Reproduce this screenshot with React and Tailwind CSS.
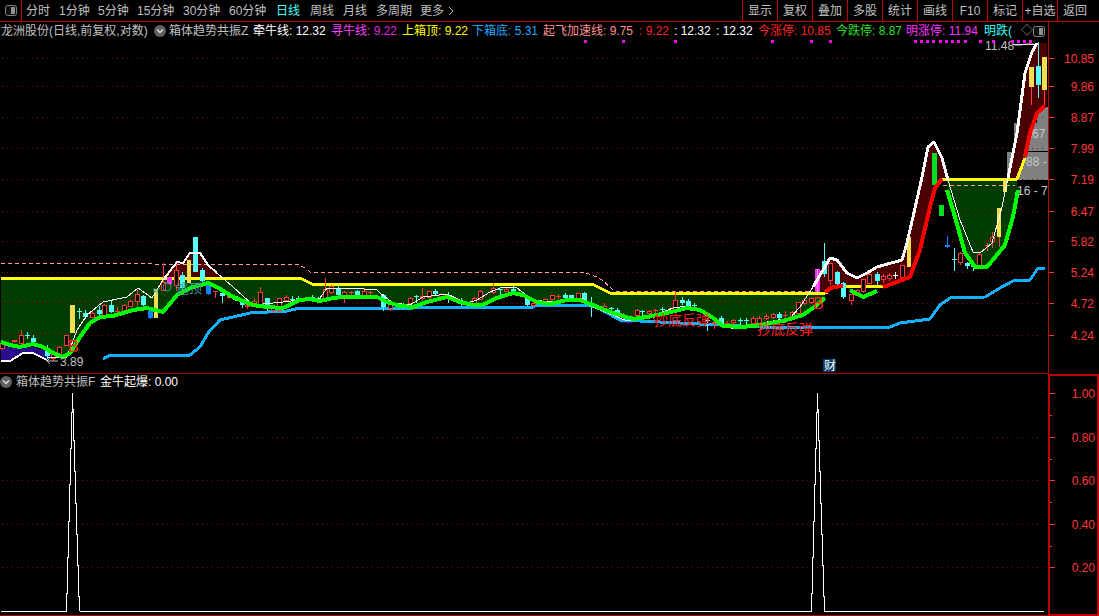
import React from 'react';

const FONT = '[font-family:"Liberation_Sans","Noto_Sans_CJK_SC",sans-serif]';

// 图表数据都是截图上的像素坐标
const GREEN_A = [[1,342],[10,345],[20,347],[33,344],[43,347],[53,353],[63,357],[70,353],[80,337],[90,323],[100,317],[113,316],[133,310],[147,308],[163,312],[177,295],[190,288],[208,283],[217,287],[233,297],[253,305],[267,307],[283,308],[300,300],[310,299],[320,301],[333,298],[343,297],[360,297],[377,297],[387,302],[400,306],[413,307],[427,302],[447,297],[460,302],[473,305],[482,305],[497,298],[513,293],[523,295],[537,302],[550,304],[567,300],[580,300],[593,305],[600,308],[613,313],[633,319],[647,317],[667,313],[687,308],[700,310],[713,318],[723,326],[743,327],[760,325],[783,321],[803,315],[813,308],[825,298]];
const GREEN_B = [[850,290],[863,297],[877,291]];
const GREEN_C = [[947,190],[955,217],[965,253],[975,267],[987,267],[1005,245],[1013,217],[1018,190]];
const RED_A = [[825,292],[833,287],[843,286]];
const RED_B = [[883,287],[897,282],[910,277],[920,250],[930,207],[935,188],[942,179]];
const RED_C = [[1025,157],[1030,133],[1037,113],[1045,106]];
const YELLOW_A = [[1,278],[300,278],[312,284],[592,284],[600,288],[610,293],[825,293],[828,292]];
const YELLOW_B = [[843,286],[883,286]];
const YELLOW_C = [[942,179],[1017,179],[1025,158]];
const BLUE = [[103,359],[110,355],[190,355],[200,347],[208,333],[220,320],[233,317],[250,313],[287,311],[300,308],[413,308],[420,307],[533,307],[537,305],[590,305],[600,309],[620,320],[760,327],[890,327],[900,323],[930,319],[940,305],[950,298],[985,297],[1000,288],[1013,281],[1030,280],[1038,268],[1045,268]];
const WHITE_A = [[163,280],[177,262],[183,263],[190,253],[200,253],[208,265],[217,273]];
const WHITE_B = [[813,287],[823,270],[830,258],[837,260],[847,273],[857,278],[867,273],[877,267],[902,260],[907,243],[913,217],[922,177],[928,147],[934,142],[942,158],[948,180]];
const WHITE_C = [[1008,178],[1017,133],[1025,73],[1032,52],[1037,43]];
const WHITE_LOW = [[1,361],[10,361],[23,353],[33,353],[43,358],[47,360]];
const THIN_A = [[47,358],[67,357],[77,330],[87,315],[103,302],[127,297],[138,288],[152,298],[163,280]];
const THIN_C = [[217,273],[233,287],[253,305],[283,302],[300,300],[310,298],[320,298],[327,288],[350,288],[377,290],[380,293],[393,303],[410,305],[423,297],[447,294],[467,303],[477,300],[490,292],[503,287],[517,288],[533,300],[550,302],[567,299],[583,298],[593,307],[600,310],[613,315],[627,321],[653,316],[673,308],[687,306],[703,310],[717,320],[733,329],[750,327],[767,322],[790,318],[800,307],[813,287],[823,270]];
const THIN_B = [[948,180],[960,220],[973,252],[980,253],[992,243],[1002,207],[1008,178]];
const DASH_A = [[1,263],[300,265],[308,270],[310,272],[583,272],[597,277],[602,280],[613,290],[615,291],[813,291]];

// [x, 最高, 实体上, 实体下, 最低, 类型]
const CANDLES = [
  [2,342,343,348,349,'r'],[14,340,340,341,342,'r'],[21,330,335,343,346,'r'],[27,332,335,335,338,'c'],[33,335,338,342,345,'c'],[47,345,348,356,358,'c'],[53,351,353,358,360,'r'],[59,346,347,355,357,'r'],[66,335,335,345,345,'r'],
  [79,308,311,311,318,'c'],[85,310,313,317,318,'c'],[92,311,313,317,317,'r'],[99,306,310,314,315,'c'],[104,304,305,316,316,'r'],[111,300,305,312,312,'c'],[117,307,311,311,312,'r'],[124,304,305,311,312,'r'],[130,300,301,306,306,'r'],[137,290,294,301,305,'r'],[143,295,296,305,308,'c'],[150,308,311,318,318,'b'],[163,263,282,290,290,'r'],[169,277,277,284,284,'p'],[176,262,270,285,290,'r'],[182,272,275,288,293,'c'],[202,268,270,281,283,'c'],[208,285,285,294,294,'b'],[215,291,291,291,297,'r'],[222,290,293,296,302,'c'],[229,293,295,297,298,'r'],[235,296,296,300,300,'c'],[242,300,302,305,307,'c'],[247,304,305,306,308,'r'],[254,298,301,303,304,'r'],[260,287,292,305,307,'r'],[267,298,298,308,310,'c'],[273,306,308,310,311,'r'],[279,298,298,310,311,'r'],[286,295,297,300,301,'r'],[292,296,299,299,302,'c'],[298,296,298,300,301,'c'],
  [305,297,298,300,300,'r'],[312,295,297,299,300,'c'],[318,297,298,300,301,'c'],[325,278,289,298,298,'r'],[331,285,286,292,293,'r'],[338,284,288,295,295,'c'],[344,291,292,295,302,'r'],[351,291,292,292,295,'r'],[357,290,291,295,295,'c'],[364,288,291,295,296,'r'],[370,291,292,292,295,'r'],[383,294,295,307,310,'c'],[390,301,302,308,310,'r'],[403,303,305,305,308,'c'],[410,297,298,303,304,'r'],[416,295,296,296,302,'c'],[422,288,296,298,299,'r'],[429,291,291,297,299,'r'],[435,289,291,294,295,'c'],[441,293,294,296,296,'r'],[448,292,295,295,302,'c'],[461,298,303,303,305,'c'],[474,297,298,303,304,'r'],[480,290,291,299,299,'r'],[493,283,288,292,293,'r'],[500,289,289,289,294,'c'],[506,288,289,291,291,'r'],[513,286,289,292,292,'c'],[527,296,297,305,305,'c'],[533,302,303,305,306,'r'],[545,298,299,301,302,'r'],[552,295,295,299,300,'r'],[558,294,296,296,298,'r'],[565,293,295,298,298,'c'],[571,295,295,298,299,'c'],[578,293,293,298,299,'r'],[584,292,293,300,300,'c'],[591,297,306,306,316,'c'],
  [604,303,306,310,311,'r'],[611,307,308,308,312,'c'],[617,308,310,316,317,'c'],[623,313,315,317,319,'r'],[630,315,316,318,320,'r'],[637,309,310,315,316,'r'],[642,310,311,311,315,'c'],[649,310,311,313,315,'r'],[655,309,310,310,315,'r'],[662,307,309,309,312,'c'],[669,308,310,311,313,'r'],[675,291,300,309,310,'r'],[682,297,300,303,304,'c'],[688,299,301,307,308,'c'],[694,303,305,305,310,'c'],[707,318,320,320,330,'c'],[714,320,322,323,328,'r'],[721,316,318,323,324,'c'],[727,321,323,325,326,'r'],[733,319,320,322,324,'r'],[740,318,320,320,324,'c'],[746,318,320,320,324,'c'],[753,316,318,323,325,'r'],[759,316,318,323,325,'r'],[766,314,316,318,319,'r'],[773,313,314,317,318,'r'],[779,312,314,318,320,'c'],[785,311,315,315,322,'r'],[792,311,312,318,318,'r'],[798,302,302,313,313,'r'],[804,298,300,303,304,'r'],[811,297,298,302,303,'r'],
  [824,243,261,274,276,'c'],[830,263,263,280,284,'r'],[837,271,272,284,286,'c'],[843,282,283,297,298,'c'],[851,294,294,300,304,'r'],[857,289,290,295,295,'r'],[863,279,279,291,292,'r'],[869,273,274,283,283,'r'],[877,272,274,281,284,'c'],[883,274,276,279,282,'r'],[889,273,275,278,280,'r'],[895,272,275,275,278,'w'],[902,265,265,277,278,'r'],
  [947,236,245,247,247,'b'],[954,248,259,259,270,'c'],[960,252,253,262,264,'r'],[967,262,263,266,268,'c'],[973,264,266,266,270,'c'],[979,253,254,265,266,'r'],[987,243,245,245,250,'r'],[992,232,237,241,247,'r'],
];
const BARS = [[70,305,5,28,'#f0e050'],[154,289,4,29,'#f0e050'],[187,260,4,23,'#f0e050'],[193,237,5,35,'#54fcfc'],[907,237,4,30,'#f0e050'],[932,153,5,32,'#00e020'],[939,205,5,11,'#00e020'],[997,208,4,29,'#f0e050'],[1003,180,4,12,'#f0e050'],[1029,67,5,20,'#f0e050'],[1036,66,5,19,'#54fcfc'],[1042,57,5,33,'#f0e050']];
const WICKS = [[1031,87,105,'#ff4040'],[1038,42,66,'#54fcfc'],[1038,85,98,'#54fcfc'],[1044,90,105,'#ff4040'],[999,237,247,'#ff4040']];

const DOTS = [584,622,674,771,810,829,914,920,926,932,939,945,951,957,964,979,992,1011,1017,1023,1029];
const PRICE = [['10.85',58],['9.86',86],['8.87',117],['7.99',148],['7.19',179],['6.47',211],['5.82',241],['5.24',272],['4.72',303],['4.24',335]];
const SUB = [['1.00',393],['0.80',437],['0.60',480],['0.40',524],['0.20',567]];

const pts = (a) => a.map((p) => p.join(',')).join(' ');
const spike = (o) => `M${o + 1} 611 H${o + 66.5} V593 H${o + 67.5} V557 H${o + 68.5} V521 H${o + 69.5} V484 H${o + 70.5} V448 H${o + 71.5} V412 H${o + 72.5} V393 V409 H${o + 73.5} V440 H${o + 74.5} V471 H${o + 75.5} V503 H${o + 76.5} V534 H${o + 77.5} V565 H${o + 78.5} V596 H${o + 79.5} V611`;

function Line({ data, color, width = 3, dash }) {
  return <polyline points={pts(data)} fill="none" stroke={color} strokeWidth={width} strokeDasharray={dash} strokeLinejoin="bevel" shapeRendering="crispEdges" />;
}

function Candle({ c }) {
  const [x, hi, top, bot, lo, kind] = c;
  const color = { r: '#ff3838', c: '#54fcfc', b: '#0a84ff', p: '#ff30ff', w: '#ffffff' }[kind];
  const filled = kind !== 'r';
  return (
    <g shapeRendering="crispEdges">
      <line x1={x + 0.5} x2={x + 0.5} y1={hi} y2={lo + 1} stroke={color} />
      {top === bot ? (
        <line x1={x - 2} x2={x + 3} y1={top + 0.5} y2={top + 0.5} stroke={color} />
      ) : filled ? (
        <rect x={x - 2} y={top} width={5} height={bot - top} fill={color} />
      ) : (
        <rect x={x - 2 + 0.5} y={top + 0.5} width={4} height={bot - top} fill="#000" stroke={color} />
      )}
    </g>
  );
}

function MainChart() {
  return (
    <svg className="block" width="1048" height="351" viewBox="0 22 1048 351">
      <g fill="#808080">
        <rect x="1037" y="107" width="11" height="16" />
        <rect x="1014" y="123" width="34" height="28" />
        <rect x="1007" y="152" width="41" height="28" />
      </g>
      {/* 填充区 */}
      <polygon points={pts([...YELLOW_A.slice(0, 7), ...[...GREEN_A].reverse()])} fill="#003c00" />
      <polygon points={pts([[947,180],[1017,180],...[...GREEN_C].reverse()])} fill="#003c00" />
      <polygon points={pts([[1,345],[10,347],[20,349],[33,347],[43,350],[53,353],[47,360],[43,358],[33,353],[23,353],[10,361],[1,361]])} fill="#2a0c8c" />
      <polygon points={pts([[622,317],[633,321],[640,320],[630,324],[620,322]])} fill="#2a0c8c" />
      <polygon points={pts([...WHITE_A, [222,278], [163,278]])} fill="#4a0000" />
      <polygon points={pts([...WHITE_B, [948,180], ...[...RED_B].reverse(), [843,286], [825,292]])} fill="#4a0000" />
      <polygon points={pts([...WHITE_C, [1047,43], [1047,106], ...[...RED_C].reverse(), [1017,180], [1008,180]])} fill="#4a0000" />

      <g stroke="#8c0000" strokeDasharray="1 4" shapeRendering="crispEdges">
        {PRICE.map(([t, y]) => <line key={t} x1="2" x2="1047" y1={y + 0.5} y2={y + 0.5} />)}
      </g>
      <Line data={DASH_A} color="#ff9c9c" width={1} dash="4 3" />
      <Line data={[[943,185],[1015,185]]} color="#ff9c9c" width={1} dash="4 3" />
      <Line data={BLUE} color="#12b2ff" />
      <Line data={YELLOW_A} color="#ffff00" />
      <Line data={YELLOW_B} color="#ffff00" />
      <Line data={YELLOW_C} color="#ffff00" />

      {CANDLES.map((c) => <Candle key={c[0]} c={c} />)}
      <g shapeRendering="crispEdges">
        {BARS.map(([x, y, w, h, f]) => <rect key={x} x={x} y={y} width={w} height={h} fill={f} />)}
        {WICKS.map(([x, a, b, f]) => <line key={x + '-' + a} x1={x + 0.5} x2={x + 0.5} y1={a} y2={b} stroke={f} />)}
        <rect x="815" y="269" width="2" height="23" fill="#ff30ff" />
        <rect x="817" y="269" width="1" height="23" fill="#ff90ff" />
        <rect x="818" y="269" width="2" height="23" fill="#ff30ff" />
      </g>

      <Line data={THIN_A} color="#ffffff" width={1} />
      <Line data={THIN_C} color="#ffffff" width={1} />
      <Line data={THIN_B} color="#ffffff" width={1} />
      <Line data={[[1013,44],[1037,44]]} color="#ffffff" width={1} />
      <Line data={WHITE_LOW} color="#ffffff" width={2} />
      <Line data={WHITE_A} color="#ffffff" width={2} />
      <Line data={WHITE_B} color="#ffffff" width={3} />
      <Line data={WHITE_C} color="#ffffff" width={3} />
      <Line data={GREEN_A} color="#00ff00" width={4} />
      <Line data={GREEN_B} color="#00ff00" width={4} />
      <Line data={GREEN_C} color="#00ff00" width={4} />
      <Line data={RED_A} color="#ff0000" width={4} />
      <Line data={RED_B} color="#ff0000" width={4} />
      <Line data={RED_C} color="#ff0000" width={4} />

      <g className={FONT}>
        <text x="68" y="352" fontSize="16" fill="#ff2020">B</text>
        <text x="813" y="309" fontSize="16" fill="#ff2020">B</text>
        <path d="M58 361H47M50 358l-3 3 3 3" stroke="#c0c0c0" fill="none" />
        <text x="60" y="366" fontSize="12" fill="#c0c0c0">3.89</text>
        <path d="M160 288l-6 4M154 288v4h4" stroke="#3c9a9a" fill="none" />
        <circle cx="167" cy="287" r="4" stroke="#3c9a9a" fill="none" />
        <text x="176" y="293" fontSize="13" fill="#3c9a9a">逃顶</text>
        <path d="M652 317l6 6" stroke="#ff2020" />
        <text x="654" y="325" fontSize="14" fill="#ff2020">抄底反弹</text>
        <text x="757" y="334" fontSize="14" fill="#ff2020">抄底反弹</text>
        <rect x="823" y="359" width="13" height="13" fill="#0a3a6a" />
        <text x="824" y="370" fontSize="12" fill="#ffffff">财</text>
        <text x="1032" y="138" fontSize="12" fill="#c8c8c8">67</text>
        <text x="1026" y="166" fontSize="12" fill="#c8c8c8">88 -</text>
        <text x="1017" y="195" fontSize="12" fill="#c8c8c8">16 - 7</text>
        <text x="985" y="50" fontSize="12" fill="#c0c0c0">11.48</text>
        <path d="M1014 45h8M1025 44h8" stroke="#c0c0c0" />
      </g>
      <g fill="#ff00ff">
        {DOTS.map((x) => <rect key={x} x={x} y="40" width="3" height="3" />)}
      </g>
    </svg>
  );
}

function SubChart() {
  return (
    <svg className="block" width="1048" height="240" viewBox="0 375 1048 240">
      <g stroke="#8c0000" strokeDasharray="1 4" shapeRendering="crispEdges">
        {SUB.slice(1).map(([t, y]) => <line key={t} x1="2" x2="1047" y1={y + 0.5} y2={y + 0.5} />)}
      </g>
      <path d={spike(0)} fill="none" stroke="#fff" shapeRendering="crispEdges" />
      <path d={spike(745) + ' H1044'} fill="none" stroke="#fff" shapeRendering="crispEdges" />
      <path d="M80 611H811" fill="none" stroke="#fff" shapeRendering="crispEdges" />
    </svg>
  );
}

function Axis({ rows, minor, top, height }) {
  return (
    <svg className="block" width="49" height={height} viewBox={`1049 ${top} 49 ${height}`}>
      {rows.map(([t, y]) => (
        <g key={t}>
          <line x1="1049" x2="1054" y1={y + 0.5} y2={y + 0.5} stroke="#ff3838" shapeRendering="crispEdges" />
          <text x="1094" y={y + 5} fontSize="12" fill="#ff3838" textAnchor="end" className={FONT}>{t}</text>
        </g>
      ))}
      {minor.map((y) => <line key={y} x1="1049" x2="1051" y1={y + 0.5} y2={y + 0.5} stroke="#ff3838" shapeRendering="crispEdges" />)}
    </svg>
  );
}

function PanelIcon() {
  return (
    <svg width="12" height="11" viewBox="0 0 12 11" className="shrink-0">
      <rect x="0.5" y="0.5" width="11" height="10" rx="2" fill="#111" stroke="#808080" />
      <rect x="6" y="2" width="4" height="7" fill="#909090" />
    </svg>
  );
}

function Chevron() {
  return (
    <svg width="12" height="12" viewBox="0 0 12 12" className="shrink-0">
      <circle cx="6" cy="6" r="6" fill="#606060" />
      <path d="M3 4.5l3 3 3-3" fill="none" stroke="#e0e0e0" strokeWidth="1.5" />
    </svg>
  );
}

const PERIODS = [
  ['分时', 'w-[33px]'], ['1分钟', 'w-[39px]'], ['5分钟', 'w-[39px]'], ['15分钟', 'w-[46px]'], ['30分钟', 'w-[46px]'], ['60分钟', 'w-[47px]'],
  ['日线', 'w-[34px] text-[#54fcfc]'], ['周线', 'w-[33px]'], ['月线', 'w-[33px]'], ['多周期', 'w-[44px]'],
];
const TABS = ['显示', '复权', '叠加', '多股', '统计', '画线', 'F10', '标记', '+自选', '返回'];

function Toolbar() {
  return (
    <div className="flex h-[22px] items-center border-b border-[#c00000] text-[12px] text-[#c0c0c0]">
      <div className="flex h-full w-[22px] shrink-0 items-center justify-center border-r border-[#c00000]">
        <PanelIcon />
      </div>
      <div className="flex pl-[4px]">
        {PERIODS.map(([t, c]) => <span key={t} className={`whitespace-nowrap ${c}`}>{t}</span>)}
        <span className="flex w-[40px] items-center gap-[4px] whitespace-nowrap">
          更多
          <svg width="6" height="10" viewBox="0 0 6 10"><path d="M1 1l4 4-4 4" fill="none" stroke="#c0c0c0" /></svg>
        </span>
      </div>
      <div className="ml-auto flex h-full">
        {TABS.map((t) => (
          <span key={t} className="flex h-full w-[35px] items-center justify-center whitespace-nowrap border-l border-[#c00000]">{t}</span>
        ))}
        <span className="w-[7px]" />
      </div>
    </div>
  );
}

function Legend() {
  return (
    <div className="absolute left-0 top-[1px] flex h-[16px] w-[1048px] items-center overflow-hidden pl-[1px] text-[12px] leading-none whitespace-nowrap">
      <span className="w-[153px] shrink-0 text-[#c0c0c0]">龙洲股份(日线,前复权,对数)</span>
      <span className="mr-[3px]"><Chevron /></span>
      <span className="w-[84px] shrink-0 text-[#c0c0c0]">箱体趋势共振Z</span>
      <span className="w-[78px] shrink-0 text-white">牵牛线: 12.32</span>
      <span className="w-[71px] shrink-0 text-[#ff40ff]">寻牛线: <span className="text-[#e020e0]">9.22</span></span>
      <span className="w-[70px] shrink-0 text-[#ffff00]">上箱顶: 9.22</span>
      <span className="w-[71px] shrink-0 text-[#20a8ff]">下箱底: 5.31</span>
      <span className="w-[96px] shrink-0 text-[#ff9090]">起飞加速线: 9.75</span>
      <span className="w-[35px] shrink-0 text-[#ff2020]">: 9.22</span>
      <span className="w-[42px] shrink-0 text-white">: 12.32</span>
      <span className="w-[42px] shrink-0 text-white">: 12.32</span>
      <span className="w-[78px] shrink-0 text-[#ff2020]">今涨停: 10.85</span>
      <span className="w-[70px] shrink-0 text-[#20e020]">今跌停: 8.87</span>
      <span className="w-[78px] shrink-0 text-[#ff30ff]">明涨停: 11.94</span>
      <span className="w-[37px] shrink-0 text-[#30ffff]">明跌(</span>
      <span className="w-[12px] shrink-0 text-[#909090]">◇</span>
      <PanelIcon />
    </div>
  );
}

export default function App() {
  return (
    <div className={`h-[616px] w-[1099px] overflow-hidden bg-black ${FONT}`}>
      <Toolbar />
      <div className="flex">
        <div className="w-[1048px] shrink-0">
          <div className="relative h-[352px] border-b border-[#a00000]">
            <MainChart />
            <Legend />
          </div>
          <div className="h-[242px] border-b border-[#a00000]">
            <div className="flex h-[16px] items-center text-[12px] leading-none whitespace-nowrap">
              <Chevron />
              <span className="ml-[4px] w-[84px] text-[#c0c0c0]">箱体趋势共振F</span>
              <span className="text-white">金牛起爆: 0.00</span>
            </div>
            <div className="-mt-[15px]">
              <SubChart />
            </div>
          </div>
        </div>
        <div className="w-[51px] shrink-0">
          <div className="h-[352px] border-l border-[#c00000]">
            <Axis rows={PRICE} minor={[]} top={22} height={351} />
          </div>
          <div className="h-[242px] border-2 border-[#c00000]">
            <Axis rows={SUB} minor={[415, 459, 502, 546]} top={376} height={238} />
          </div>
        </div>
      </div>
    </div>
  );
}
